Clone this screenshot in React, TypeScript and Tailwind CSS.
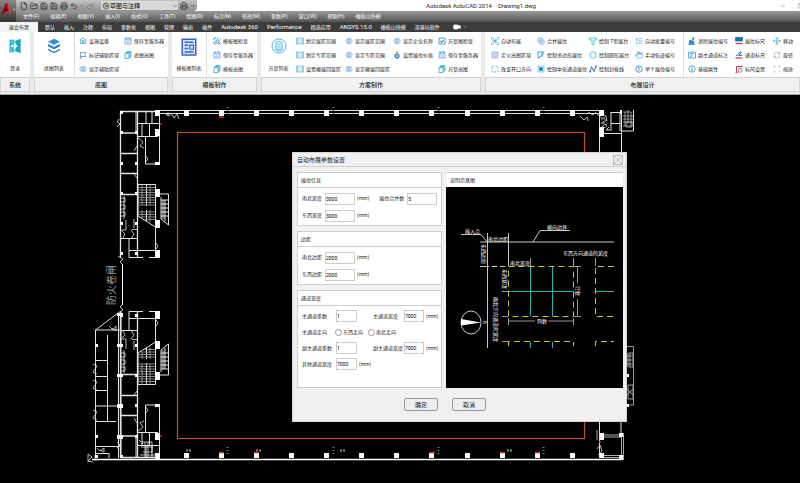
import type { ReactNode } from "react";
import {
  ChevronDown,
  File,
  FolderOpen,
  Hand,
  ListOrdered,
  Minus,
  Move,
  Printer,
  Redo2,
  RefreshCw,
  Save,
  Scan,
  Settings,
  Square,
  Undo2,
  Video,
} from "lucide-react";

const menus = ["文件(F)", "编辑(E)", "视图(V)", "插入(I)", "格式(O)", "工具(T)", "绘图(D)", "标注(N)", "修改(M)", "参数(P)", "窗口(W)", "帮助(H)", "橄榄山快模"];

const tabs = ["默认", "插入", "注释", "布局", "参数化", "视图", "管理", "输出", "插件", "Autodesk 360", "Performance", "精选应用", "ANSYS 15.0", "橄榄山快模", "深基坑软件"];

const Glyph = ({ children, className = "text-[#2f97dc]" }: { children: ReactNode; className?: string }) => (
  <svg viewBox="0 0 16 16" className={`h-2 w-2 shrink-0 ${className}`} fill="none" stroke="currentColor" strokeWidth="1.6">
    {children}
  </svg>
);

const icons: Record<string, ReactNode> = {
  device: (
    <Glyph className="text-[#45abe0]">
      <path d="M1 6l7-4 7 4-2 1v6H3V7z" />
      <path d="M6 7h4v4H6z" />
    </Glyph>
  ),
  flag: (
    <Glyph className="text-[#5b92e8]">
      <path d="M3 2v12M3 3h11l-3 4 3 4H3" />
      <path d="M1 14h4" stroke="#e5595f" />
    </Glyph>
  ),
  eye: (
    <Glyph className="text-[#5fa4ea]">
      <path d="M1 8c3-5 11-5 14 0-3 5-11 5-14 0z" />
      <circle cx="8" cy="8" r="2.4" />
      <path d="M4 2l1 2M8 1v2M12 2l-1 2M4 14l1-2M8 15v-2M12 14l-1-2" />
    </Glyph>
  ),
  save: (
    <Glyph className="text-[#4b9be8]">
      <path d="M2 2h12v12H2zM5 2v4h6V2M5 10h6" />
    </Glyph>
  ),
  pages: (
    <Glyph className="text-[#2aa5d8]">
      <path d="M2 5h8v10H2zM4 5V3h8v10h-2M6 3V1h8v10h-2" />
    </Glyph>
  ),
  check: (
    <Glyph className="text-[#1f8ed8]">
      <path d="M2 6V2h4M8 2h2M14 2v3M2 9v5h4" />
      <circle cx="9" cy="9" r="3.4" strokeWidth="2" />
      <path d="M11 11l4 4" strokeWidth="2" />
    </Glyph>
  ),
  mark: (
    <Glyph className="text-[#1f8ed8]">
      <path d="M2 2h12v12H2z" />
      <path d="M5 8l2 3 4-5" strokeWidth="2.2" />
    </Glyph>
  ),
  zone: (
    <Glyph className="text-[#2ba6d6]">
      <path d="M2 1v14M14 1v14" strokeWidth="2" />
      <path d="M6 1v14M10 1v14" strokeDasharray="2 2" />
      <path d="M2 3h12M2 13h12" strokeDasharray="1 2" />
    </Glyph>
  ),
  price: (
    <Glyph className="text-[#2f86d8]">
      <path d="M8 1v4" stroke="#f0a03c" strokeWidth="5" />
      <circle cx="8" cy="10" r="4.5" fill="#2f86d8" />
      <circle cx="8" cy="10" r="1.4" stroke="#fff" />
    </Glyph>
  ),
  auto: (
    <Glyph className="text-[#5aa4e8]">
      <path d="M1 5V1h4M11 1h4v4M15 11v4h-4M5 15H1v-4" />
      <path d="M4 4l8 8M12 4l-8 8M8 3v10M3 8h10" />
    </Glyph>
  ),
  area: (
    <Glyph className="text-[#7b8fe0]">
      <path d="M2 2h12v12H2z" fill="#c6d3f6" strokeDasharray="2 1.5" />
    </Glyph>
  ),
  opening: (
    <Glyph className="text-[#5d9be8]">
      <path d="M2 2h12v12H2z" strokeDasharray="4 3" />
    </Glyph>
  ),
  merge: (
    <Glyph className="text-[#7fb5ea]">
      <path d="M2 2h8v8H2zM6 6h8v8H6z" fill="#d9eafb" />
    </Glyph>
  ),
  polygon: (
    <Glyph className="text-[#2f97dc]">
      <path d="M2 2h11L4 14H2zM8 12l6-7" strokeWidth="2" />
    </Glyph>
  ),
  center: (
    <Glyph className="text-[#1f9bd8]">
      <path d="M2 2h12v12H2z" strokeDasharray="3 2" />
      <path d="M5 5h6v6H5z" fill="#1677c8" />
    </Glyph>
  ),
  tee: (
    <Glyph className="text-[#2cc0c8]">
      <path d="M1 2h14v4h-5v9H6V6H1z" />
    </Glyph>
  ),
  round: (
    <Glyph className="text-[#2cc0c8]">
      <circle cx="8" cy="8" r="6.5" />
      <path d="M5 8h1M8 8h1M11 8h1" />
    </Glyph>
  ),
  seal: (
    <Glyph className="text-[#2f6fd8]">
      <path d="M2 14L5 3l5 10 4-11" strokeWidth="2" />
      <path d="M1 12h3v3H1zM12 1h3v3h-3z" fill="currentColor" stroke="none" />
    </Glyph>
  ),
  single: (
    <Glyph className="text-[#2f7fdc]">
      <circle cx="8" cy="8" r="6.5" />
      <path d="M6 6l2-2v8" />
    </Glyph>
  ),
  clear: (
    <Glyph className="text-[#1f87e0]">
      <path d="M12 1L9 6" strokeWidth="3" />
      <path d="M4 6l8 3-1 5-9-1z" fill="currentColor" />
      <path d="M1 15h13" />
    </Glyph>
  ),
  note: (
    <Glyph className="text-[#3d95e0]">
      <path d="M1 2h14v12H1zM4 5h8M4 8h6M4 11h4" />
    </Glyph>
  ),
  info: (
    <Glyph className="text-[#2f9bd8]">
      <circle cx="8" cy="8" r="6.5" />
      <path d="M8 3v2M8 7v6" strokeWidth="2.4" />
    </Glyph>
  ),
  ruler: (
    <Glyph className="text-[#1c6fa8]">
      <path d="M1 1h14v7H1z" fill="currentColor" />
      <path d="M1 13h14" stroke="#e5353c" strokeWidth="2.4" />
    </Glyph>
  ),
  slope: (
    <Glyph className="text-[#2f6fe0]">
      <path d="M2 10L12 1v3L7 9h7" strokeWidth="2" />
      <path d="M1 14h14" stroke="#e5353c" strokeWidth="2.4" />
    </Glyph>
  ),
  scaleSet: (
    <Glyph className="text-[#8b8b8b]">
      <path d="M3 15V3h11M1 15h4M14 1v4" stroke="#e5353c" strokeWidth="2" />
      <path d="M7 7h7v7H7zM9 10h3" />
    </Glyph>
  ),
  list: <ListOrdered className="size-2 shrink-0 text-[#3d9ad8]" />,
  hand: <Hand className="size-2 shrink-0 text-[#3d9ad8]" />,
  move: <Move className="size-2 shrink-0 text-[#2f97dc]" />,
  rotate: <RefreshCw className="size-2 shrink-0 text-[#a5a5a5]" />,
  zoom: <Scan className="size-2 shrink-0 text-[#a5a5a5]" />,
};

type Tool = [icon: string, label: string];

function Tools({ items, className }: { items: Tool[]; className: string }) {
  return (
    <div className={`flex shrink-0 flex-col pt-0.5 ${className}`}>
      {items.map(([icon, label]) => (
        <button key={label} type="button" className="flex h-3.5 items-center gap-0.5 whitespace-nowrap">
          {icons[icon]}
          {label}
        </button>
      ))}
    </div>
  );
}

function BigTool({ label, className, children }: { label: string; className: string; children: ReactNode }) {
  return (
    <button type="button" className={`flex h-10 shrink-0 flex-col items-center justify-between pt-1.5 pb-px whitespace-nowrap ${className}`}>
      {children}
      {label}
    </button>
  );
}

function Panel({ title, className, children }: { title: string; className: string; children: ReactNode }) {
  return (
    <section className={`flex flex-col bg-white ${className}`}>
      <div className="flex h-[45px] overflow-hidden">{children}</div>
      <h2 className="flex h-[15px] items-center justify-center border border-[#d2d2d2] bg-[#f1f1f1] text-[6px] font-medium text-[#222]">{title}</h2>
    </section>
  );
}

function TitleBar() {
  return (
    <header className="flex h-[22px]">
      <button type="button" aria-label="AutoCAD" className="flex w-4 shrink-0 items-center bg-linear-to-b from-[#8a8a8a] to-[#333]">
        <svg viewBox="0 0 48 60" className="h-5 w-4">
          <path d="M18 6h5l12 34-9-4-3-6-8 2-4 7-8 2z" fill="#c5161d" />
          <path d="M18 6l3 17-6 8-6 10-6 1z" fill="#8a0d12" />
          <path d="M20 18l4 11-9 3z" fill="#3a0a0c" />
          <path d="M23 6l12 34-7-3z" fill="#e8433c" />
          <path d="M39 25h7l-3.500 4z" fill="#eee" />
        </svg>
      </button>
      <div className="flex min-w-0 flex-1 flex-col">
        <div className="flex h-[11px] bg-white">
          <div className="flex w-[181px] shrink-0 items-center gap-0.5 rounded-br-sm bg-linear-to-b from-[#c4c4c4] to-[#8e8e8e] pl-1 text-[#222]">
            <File className="size-2" />
            <FolderOpen className="size-2" />
            <Save className="size-2" />
            <Save className="size-2" />
            <Printer className="size-2" />
            <Undo2 className="size-2" />
            <ChevronDown className="size-1" />
            <Redo2 className="size-2 text-[#777]" />
            <div className="ml-auto flex h-[9px] w-[77px] items-center bg-[#d8d8d8] pl-px">
              <Settings className="size-2" />
              <select aria-label="工作空间" className="w-16 flex-1 appearance-none bg-transparent text-[6px] leading-none text-black">
                <option>草图与注释</option>
              </select>
              <ChevronDown className="size-1.5" />
            </div>
            <Printer className="size-2" />
            <ChevronDown className="mr-px size-1.5" />
          </div>
          <div className="flex flex-1 items-center">
            <h1 className="ml-auto w-[378px] text-[6px] whitespace-pre text-[#222]">Autodesk AutoCAD 2014    Drawing1.dwg</h1>
            <Minus className="mr-3 -ml-6 size-1.5 text-[#777]" />
            <Square className="-mr-1 size-1.5 text-[#777]" />
          </div>
        </div>
        <nav className="flex h-[11px] items-center gap-[11px] bg-linear-to-b from-[#9a9a9a] to-[#555] pl-[7px] text-white">
          {menus.map((m) => (
            <button key={m} type="button" className="whitespace-nowrap">{m}</button>
          ))}
        </nav>
      </div>
    </header>
  );
}

function Ribbon() {
  return (
    <div className="flex gap-1 border-b border-[#aaa] bg-[#e9e9e9] pb-0.5">
      <Panel title="系统" className="w-[30px]">
        <BigTool label="登录" className="w-full">
          <svg viewBox="0 0 42 48" className="h-4 w-3.5">
            <path d="M4 5h16v38H4z" fill="#3fc0cf" />
            <path d="M22 8l16-6v44l-16-6z" fill="#1aa9bd" />
            <path d="M9 24h16M18 16l8 8-8 8" stroke="#fff" strokeWidth="4" fill="none" />
          </svg>
        </BigTool>
      </Panel>
      <Panel title="底图" className="w-[134px]">
        <BigTool label="底图列表" className="w-10">
          <svg viewBox="0 0 40 48" className="h-4 w-3.5">
            <path d="M20 2l18 9-18 9L2 11z" fill="#2f8fe8" />
            <path d="M2 18l18 9 18-9v7l-18 9L2 25zM2 32l18 9 18-9v5l-18 9L2 37z" fill="#2676dc" />
          </svg>
        </BigTool>
        <Tools className="w-[50px] border-l border-[#ddd] pl-1" items={[["device", "设施设备"], ["flag", "标记辅助区域"], ["eye", "显示辅助区域"]]} />
        <Tools className="w-11" items={[["save", "保存至服务器"], ["pages", "底图出图"]]} />
      </Panel>
      <Panel title="模板制作" className="w-[85px]">
        <BigTool label="模板图列表" className="w-[34px]">
          <svg viewBox="0 0 42 48" className="h-[18px] w-4" fill="none" stroke="#3564d8" strokeWidth="4">
            <path d="M3 3h36v42H3z" fill="#dce7fb" />
            <path d="M9 11h24M9 19h10M9 28h10M9 37h24" />
            <path d="M23 19h10v11H23z" strokeWidth="3" />
          </svg>
        </BigTool>
        <Tools className="w-12 border-l border-[#ddd] pl-1.5" items={[["check", "模板图检查"], ["save", "保存至服务器"], ["pages", "模板出图"]]} />
      </Panel>
      <Panel title="方案制作" className="w-[220px]">
        <BigTool label="方案列表" className="w-[35px]">
          <svg viewBox="0 0 48 48" className="h-4 w-4" fill="none" stroke="#2aa3dc" strokeWidth="2.500">
            <circle cx="24" cy="24" r="21" />
            <ellipse cx="24" cy="15" rx="10" ry="4" />
            <path d="M14 19v4c0 5 20 5 20 0v-4M14 26v4c0 5 20 5 20 0v-4M14 33v2c0 5 20 5 20 0v-2" />
          </svg>
        </BigTool>
        <Tools className="w-[49px]" items={[["zone", "划定展区范围"], ["zone", "划定专区范围"], ["zone", "设置撤展回旋区"]]} />
        <Tools className="w-12" items={[["eye", "显示展区范围"], ["eye", "显示专区范围"], ["eye", "显示撤展回旋区"]]} />
        <Tools className="w-[45px]" items={[["eye", "显示企业名称"], ["price", "设置展位价格"]]} />
        <Tools className="w-10" items={[["mark", "方案图检查"], ["save", "保存至服务器"], ["pages", "方案出图"]]} />
      </Panel>
      <Panel title="布展设计" className="min-w-0 flex-1">
        <Tools className="w-[52px] pl-1.5" items={[["auto", "自动布展"], ["area", "定义出图区域"], ["opening", "改变开口方向"]]} />
        <Tools className="w-[52px]" items={[["merge", "合并展位"], ["polygon", "绘制多边形展位"], ["center", "绘制中央通道展位"]]} />
        <Tools className="w-[46px]" items={[["tee", "绘制 T型展台"], ["round", "绘制圆形展台"], ["seal", "绘制封板线"]]} />
        <Tools className="w-12" items={[["list", "自动批量编号"], ["hand", "手动轨迹编号"], ["single", "单个展位编号"]]} />
        <Tools className="w-[52px] border-l border-[#ddd] pl-1" items={[["clear", "清除展位编号"], ["note", "副主通道标注"], ["info", "基础属性"]]} />
        <Tools className="w-[38px]" items={[["ruler", "展位标尺"], ["slope", "通道标尺"], ["scaleSet", "标尺设置"]]} />
        <Tools className="w-6" items={[["move", "移动"], ["rotate", "旋转"], ["zoom", "缩放"]]} />
      </Panel>
    </div>
  );
}

const pillars = [186, 221, 256, 291, 326, 361, 396, 431, 467, 502, 537, 572];

// One half of the west core; the south half is the same drawing mirrored.
function CoreHalf() {
  return (
    <g fill="none" stroke="#e4e4e4" strokeWidth="1">
      <path d="M120.500 111V258M137.500 111V258M120 111.500H160M120 133H138M120 153.500H138M120 173.500H138M120 194.500H138" strokeWidth="1.300" />
      <path d="M136 112V132M146 112V123M152 124V112M137 123.500H159M137 136.500H158M142 124V136M149.500 124V136M159.500 115V164M145.500 137V164H160" />
      <path d="M137 137l6 5-3 4 4 2M119 119l-2 3 3 2-3 3M145 155l3 4-3 4M134 174l3 4M137 146l-3 5" strokeWidth=".8" />
      <path d="M138 184.500H155.500V227L138 216zM146.500 184V206M146.500 210V222" />
      <path d="M138 187.500H155M138 190H155M138 192.500H155M138 195H155M138 197.500H155M138 200H155M138 202.500H155M138 205H155M138 212H155M138 214.500H155M141 217H155M145 219.500H155M142 184V205M150 184V205M142 210V217M150 210V222" stroke="#a9a9a9" strokeWidth=".8" />
      <path d="M155.500 194H168.500V225L161 219V197M163 200V219M165 200V221M161 200H168M161 204H168M161 208H168M161 212H168M161 216H168" />
      <path d="M155.500 227V258M129 250.500H160M129 238V257.500H143M149 257.500H158M120 238.500H137" />
      <path d="M124 196V219M121 198h4v4h-4M121 205h4v4h-4M121 212h4v4h-4M126 220V230H121M132 229.500H137M131 230l3 4-3 5M134 219V228M122 231l3 3-2 4M156 243l2 3-2 3M118 256l5 3-3 3 3 3" strokeWidth=".8" />
      <g fill="#fff" stroke="none">
        <path d="M155 110h5v6h-5zM155 129h5v7h-5zM155 162h5v3h-5zM155 189h5v8h-5zM155 220h5v8h-5zM155 250h5v8h-5z" />
        <path d="M120 111h3v3h-3zM135 131h3v3h-3zM120 131h3v3h-3zM120 162h3v3h-3zM135 162h3v3h-3zM120 192h3v3h-3zM135 192h3v3h-3zM120 222h3v3h-3zM135 222h3v3h-3zM120 252h3v3h-3zM135 252h3v3h-3z" />
      </g>
    </g>
  );
}

function FloorPlan() {
  return (
    <svg viewBox="0 95 800 388" className="block w-full" fill="none" stroke="#e0e0e0" fontFamily="Noto Sans CJK SC, sans-serif">
      <CoreHalf />
      <g transform="matrix(1 0 0 -1 0 569)">
        <CoreHalf />
      </g>
      <path d="M122.500 264V305" stroke="#fff" />
      <path d="M160 110.500H602M160 113.500H602" />
      <path d="M92 459.500H623" stroke="#fff" strokeWidth="1.500" />
      {/* west annex */}
      <path d="M95.500 330V458M107.500 335V421M95 330.500L118 313M95 330H120M95 360.500H107M95 376.500H107M95 390.500H107M95 406H120M95 421.500H116M95 446.500H120M95 453.500H109V458M118.500 314V458M121 312V458" />
      <path d="M93 364l4 2-4 6 4 2M93 380l4 2-4 6 4 2M93 410l4 2-4 6 4 2M109 326l4 4 3-4v5l-4-3M97 448l3 3 4-3v4l-4-2M88 454l4 3-4 4 5 1M88 454v8M95 455v6M139 440l4 4M142 442h10v10h-9M145 442v15M148 442v15M141 447h12M140 455h16" strokeWidth=".8" />
      <path d="M117 313h6v3h-6zM117 344h6v3h-6zM117 374h6v3h-6zM117 404h6v4h-6zM117 435h6v4h-6zM95 344h3v3h-3zM95 435h3v3h-3zM95 455h3v3h-3z" fill="#fff" stroke="none" />
      <path d="M164 113l5 3 2-3 3 5 3-4 2 5M168 116v-4M580 116l4 4 3-3 1 4M588 112l5 3 3-3M597 115h5" strokeWidth=".8" />
      {/* east wing */}
      <path d="M599.500 115V458M621.500 111V155M604 133.500H622M610.500 112.500H621M611 112V131M620 112V131M611 123.500H620M604 125l-3 3M609 127l-3 3h4M622 131H633.500V110M621 421V435" />
      <path d="M623 112h8v14h-8M625 112v14M628 110v14M623 116h10M623 119h10M623 122h10M626 122h6v5h-6zM600 117l7 3-6 3 6 2M602 113l4 3-5 4M603 121l4 5-5 3M606 116l1 5" strokeWidth=".9" stroke="#a9a9a9" />
      <path d="M626 346.500H633.500V405H626M628 353h5v14h-5zM630 353v14M627 356h6M627 360h6M627 364h6M628 385h5v14h-5zM627 389l6 6M633 389l-6 6" strokeWidth=".9" stroke="#aaa" />
      <path d="M604 435H621M604 437H621M604 455.500H621M604 457.500H621M621.500 433V460M623.500 433V460" stroke="#aaa" />
      <path d="M597 430v10M597 449l3-4 2 6-4 4" strokeWidth=".8" />
      <g fill="#fff" stroke="none">
        <path d="M599 110h5v6h-5zM599 127h5v10h-5zM620 110h2v4h-2zM600 433h4v7h-4zM600 453h4v5h-4zM619 433h4v4h-4zM619 455h4v4h-4zM626 374h3v3h-3zM626 404h3v3h-3z" />
        {pillars.map((x) => (
          <g key={x}>
            <rect x={x - 2} y={110} width={5} height={6} />
            <rect x={x - 2} y={453} width={5} height={5} />
          </g>
        ))}
      </g>
      {[221, 327, 432, 537].map((x) => (
        <path key={x} d={`M${x + 6.500} 447v9M${x + 6.500} 107v9`} stroke="#777" strokeWidth="2" strokeDasharray="1 2" />
      ))}
      {[186, 256, 340, 507].map((x) => (
        <path key={x} d={`M${x} 450.500h6`} stroke="#888" strokeWidth="2" strokeDasharray="2 1" />
      ))}
      <path d="M219 452.500h5M254 452.500h5M430 452.500h5M500 452.500h5M535 452.500h5M219 117h5M160 124h2M160 436h2M599 442h2" stroke="#d0202a" strokeWidth="1.500" />
      <rect x="177.500" y="132.500" width="407" height="306" stroke="#c24e22" strokeWidth="1.200" />
      <text x="0" y="0" transform="translate(115 305) rotate(-90)" fontSize="10" fill="#9a9a9a" stroke="none">防火卷闸</text>
    </svg>
  );
}

function Preview() {
  return (
    <svg viewBox="446 187 177 201" className="block w-full bg-black" fill="none" stroke="#c8c8c8" strokeWidth="1" fontFamily="Noto Sans CJK SC, sans-serif">
      <path d="M480 242H614M487.500 233V348M461 234.500H481L487 242M570 230.500H540L533 242M480 266.500H489M508.500 233V266" />
      <path d="M492 266.500H508" strokeDasharray="5 3" />
      <path d="M530.500 258V266M573.500 258V266M595.500 258V266M577.500 267V283M577.500 299V316M574 266.500H581M574 316.500H581M508.500 318V325M573.500 318V325M509 321H535M548 321H573M502 291.500H508M502 316.500H508M502 341.500H508" stroke="#999" />
      <path d="M530.500 266V316M552.500 266V316M508 291.500H573M595 291.500H614M530.500 342V348M552.500 342V348" stroke="#20b5b5" />
      <path d="M508.500 266.500H573.500V316.500H508.500zM614 266.500H595.500V316.500H614M508.500 346V341.500H573.500V346M595.500 346V341.500H614" stroke="#cfc51f" strokeDasharray="6 4" />
      <ellipse cx="471" cy="322.500" rx="10" ry="11.500" />
      <path d="M461 319l20 3.500-20 3z" fill="#fff" stroke="none" />
      <g fill="#fff" stroke="none" fontSize="5">
        <text x="465" y="233">插入点</text>
        <text x="547" y="229">横向边界</text>
        <text x="488" y="241">南北边距</text>
        <text x="510" y="265">南北宽度</text>
        <text x="563" y="255">东西方向通道的宽度</text>
        <text x="537" y="323">列数</text>
        <text transform="translate(482 244) rotate(90)">东西边距</text>
        <text transform="translate(503 269) rotate(90)">东西宽度</text>
        <text transform="translate(494 297) rotate(90)">南北方向通道的宽度</text>
        <text transform="translate(576 286) rotate(90)">行数</text>
        <text transform="translate(483 321) rotate(90)">N</text>
      </g>
    </svg>
  );
}

function Field({ id, label, value, labelClass, inputClass, unit }: { id: string; label: string; value: string; labelClass: string; inputClass: string; unit?: boolean }) {
  return (
    <>
      <label htmlFor={id} className={`shrink-0 whitespace-nowrap ${labelClass}`}>{label}</label>
      <input id={id} defaultValue={value} className={`h-3 shrink-0 border border-[#ccc] bg-white text-[5px] text-black ${inputClass}`} />
      {unit && <span className="pl-0.5">(mm)</span>}
    </>
  );
}

function Group({ title, className, children }: { title: string; className: string; children: ReactNode }) {
  return (
    <section className={`border border-[#cfcfcf] bg-white ${className}`}>
      <h3 className="flex h-[15px] items-center border-b border-[#cfcfcf] pl-[3px]">{title}</h3>
      <div className="pt-0.5 pl-1">{children}</div>
    </section>
  );
}

function LayoutDialog() {
  const radio = "mr-px size-[7px] appearance-none rounded-full border border-[#999] bg-white checked:bg-[#555]";
  return (
    <div role="dialog" aria-labelledby="dialog-title" className="absolute top-[57px] left-[292px] flex w-[335px] flex-col border border-[#d5d5d5] bg-[#f0f0f0] text-[5px] text-[#222]">
      <div className="flex h-3.5 items-center justify-between border-b border-[#d0d0d0] pr-[3px] pl-1">
        <h2 id="dialog-title" className="text-[6px]">自动布展参数设置</h2>
        <button type="button" aria-label="关闭" className="size-2.5 border border-[#bbb]">
          <svg viewBox="0 0 8 8" className="size-2" stroke="#aaa" strokeWidth=".8">
            <path d="M0 0l8 8M8 0L0 8" />
          </svg>
        </button>
      </div>
      <div className="flex gap-1 pt-[5px] pr-[3px] pl-1">
        <form className="flex w-[145px] shrink-0 flex-col gap-[5px]">
          <Group title="展位信息" className="h-[54px]">
            <div className="flex h-[17px] items-center">
              <Field id="ns-width" label="南北宽度" value="3000" labelClass="w-[23px]" inputClass="w-[30px]" unit />
              <Field id="merge" label="展位合并数" value="5" labelClass="w-[38px] pl-2.5" inputClass="w-[30px]" />
            </div>
            <div className="flex h-[17px] items-center">
              <Field id="ew-width" label="东西宽度" value="3000" labelClass="w-[23px]" inputClass="w-[30px]" unit />
            </div>
          </Group>
          <Group title="边距" className="h-[54px]">
            <div className="flex h-[17px] items-center">
              <Field id="ns-margin" label="南北边距" value="2000" labelClass="w-[23px]" inputClass="w-[30px]" unit />
            </div>
            <div className="flex h-[17px] items-center">
              <Field id="ew-margin" label="东西边距" value="2000" labelClass="w-[23px]" inputClass="w-[30px]" unit />
            </div>
          </Group>
          <Group title="通道宽度" className="h-[98px]">
            <div className="flex h-4 items-center">
              <Field id="main-count" label="主通道条数" value="1" labelClass="w-[34px]" inputClass="w-[21px]" />
              <Field id="main-width" label="主通道宽度" value="7000" labelClass="w-[47px] pl-4" inputClass="w-5" unit />
            </div>
            <div className="flex h-4 items-center">
              <span className="w-[33px]">主通道走向</span>
              <input id="dir-ew" type="radio" name="direction" className={radio} />
              <label htmlFor="dir-ew">东西走向</label>
              <input id="dir-ns" type="radio" name="direction" className={`ml-[5px] ${radio}`} />
              <label htmlFor="dir-ns">南北走向</label>
            </div>
            <div className="flex h-4 items-center">
              <Field id="sub-count" label="副主通道条数" value="1" labelClass="w-[34px]" inputClass="w-[21px]" />
              <Field id="sub-width" label="副主通道宽度" value="7000" labelClass="w-[47px] pl-4" inputClass="w-5" unit />
            </div>
            <div className="flex h-4 items-center">
              <Field id="other-width" label="其他通道宽度" value="7000" labelClass="w-[34px]" inputClass="w-[21px]" unit />
            </div>
          </Group>
        </form>
        <section className="min-w-0 flex-1">
          <h3 className="flex h-[15px] items-center border-t border-[#cfcfcf] bg-white pl-1">说明示意图</h3>
          <Preview />
        </section>
      </div>
      <div className="flex h-[33px] items-center gap-3.5 pl-[111px] text-[6px]">
        <button type="button" className="h-[13px] w-[34px] rounded-xs border border-[#999] bg-[#eee]">确定</button>
        <button type="button" className="h-[13px] w-[34px] rounded-xs border border-[#999] bg-[#eee]">取消</button>
      </div>
    </div>
  );
}

export default function App() {
  return (
    <main className="flex min-h-screen flex-col overflow-hidden bg-black font-[Roboto,'Noto_Sans_CJK_SC',sans-serif] text-[5px] leading-none text-[#222]">
      <TitleBar />
      <nav className="flex h-2.5 items-center gap-[9px] bg-[#3c3c3c] text-white">
        <button type="button" className="-mr-0.5 h-full w-[38px] bg-[#f4f4f4] text-[#222]">展会布置</button>
        {tabs.map((t) => (
          <button key={t} type="button" className={`whitespace-nowrap ${/^[A-Z]/.test(t) ? "text-[6px]" : ""}`}>{t}</button>
        ))}
        <span className="flex items-center gap-0.5 pl-1">
          <Video className="size-2 fill-current" />
          <ChevronDown className="size-1" />
        </span>
      </nav>
      <Ribbon />
      <div className="relative flex-1">
        <FloorPlan />
        <LayoutDialog />
      </div>
    </main>
  );
}
